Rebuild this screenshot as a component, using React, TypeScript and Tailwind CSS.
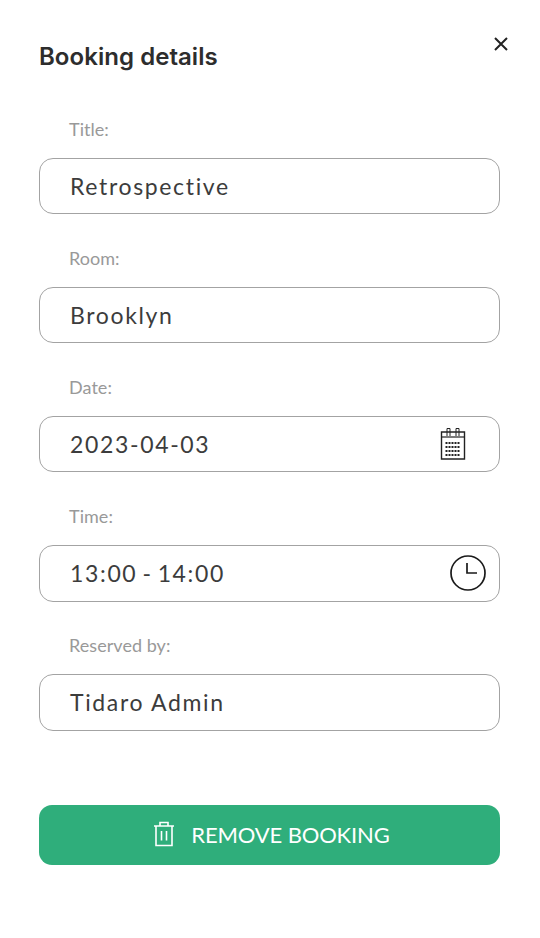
const fields = [
  { label: 'Title:', value: 'Retrospective' },
  { label: 'Room:', value: 'Brooklyn' },
  { label: 'Date:', value: '2023-04-03', icon: 'date' },
  { label: 'Time:', value: '13:00 - 14:00', icon: 'time' },
  { label: 'Reserved by:', value: 'Tidaro Admin' },
]

function CalendarIcon() {
  return (
    <svg width="26" height="34" viewBox="0 0 26 34" fill="none" stroke="#222" className="mr-[33px] mt-[-1px]">
      <path d="M1.5 5h23v27h-23z" strokeWidth="1.4" />
      <path d="M1.5 10h23" strokeWidth="1.2" />
      <path d="M7 1.5v7.5M10 1.5v7.5M16 1.5v7.5M19 1.5v7.5M7 1.5h3M16 1.5h3" strokeWidth="1" />
      <path d="M5.5 16h15M5.5 20h15M5.5 24h15M5.5 28h15" strokeWidth="2" strokeDasharray="2 1" />
    </svg>
  )
}

function ClockIcon() {
  return (
    <svg width="36" height="36" viewBox="0 0 36 36" fill="none" stroke="#1a1a1a" strokeWidth="1.7" className="mr-[13px]">
      <circle cx="18" cy="18" r="17" />
      <path d="M17 8v10h10" />
    </svg>
  )
}

function TrashIcon() {
  return (
    <svg width="22" height="26" viewBox="0 0 22 26" fill="none" stroke="#fff" strokeWidth="1.6" className="mt-[-1px]">
      <path d="M1 5h20M3 5v19.5h16V5M7 5V1.5h8V5M8.5 10v9.5M13.5 10v9.5" />
    </svg>
  )
}

export default function App() {
  return (
    <div className="relative h-[938px] w-[540px] bg-white font-['Lato',sans-serif]">
      <button className="absolute right-[31px] top-[36px] text-[#222]">
        <svg width="16" height="16" viewBox="0 0 16 16" fill="none" stroke="currentColor" strokeWidth="2">
          <path d="M2 2l12 12M14 2L2 14" />
        </svg>
      </button>

      <div className="px-[39px] pt-[41px]">
        <h1 className="font-['Inter',sans-serif] text-[24px] font-semibold leading-[32px] tracking-[0.05px] text-[#2d2d2d]">
          Booking details
        </h1>

        <div className="mt-[28.7px] w-[461px]">
          {fields.map((f) => (
            <div key={f.label} className="h-[129.2px] pt-[14px]">
              <div className="pl-[30px] text-[18px] leading-[26px] tracking-[0.05px] text-[#999999]">{f.label}</div>
              <div className="mt-[16px] flex h-[56.4px] items-center justify-between rounded-[14px] border border-[#a3a3a3] pl-[30px]">
                <span className={f.icon === 'time' ? 'text-[23px] tracking-[1.65px] text-[#3c3c3c] [word-spacing:-2.5px]' : 'text-[23px] tracking-[1.65px] text-[#3c3c3c]'}>
                  {f.value}
                </span>
                {f.icon === 'date' && <CalendarIcon />}
                {f.icon === 'time' && <ClockIcon />}
              </div>
            </div>
          ))}
        </div>

        <button className="mt-[57px] flex h-[60px] w-[461px] items-center justify-center gap-[16px] rounded-[13px] bg-[#2fae7b] pl-[4px] text-[22px] tracking-[-0.15px] text-white">
          <TrashIcon />
          REMOVE BOOKING
        </button>
      </div>
    </div>
  )
}
